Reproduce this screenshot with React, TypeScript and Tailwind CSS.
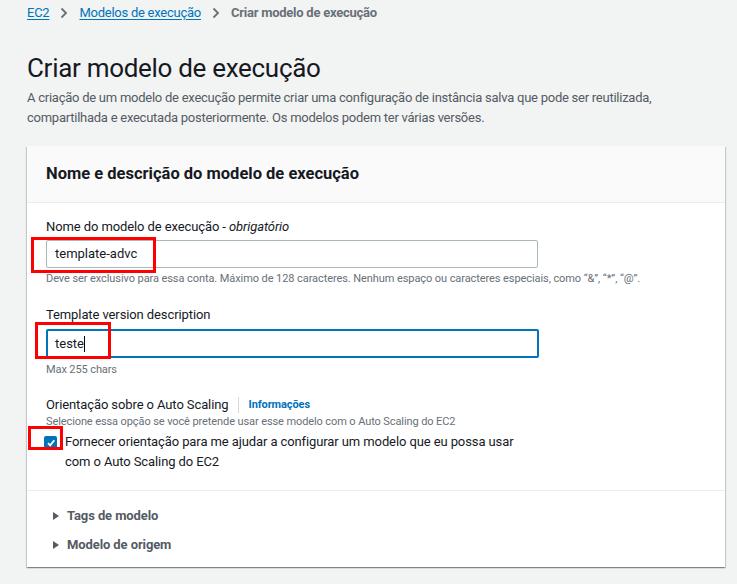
import React from "react";

const font = { fontFamily: "Roboto, 'Liberation Sans', sans-serif" };

const Chevron = () => (
  <svg width="10" height="12" viewBox="0 0 10 12" className="mx-[10px]">
    <path d="M2.5 1.5 7 6l-4.5 4.5" fill="none" stroke="#687078" strokeWidth="1.8" />
  </svg>
);

const Caret = () => (
  <svg width="8" height="10" viewBox="0 0 8 10" className="mr-[7px]">
    <path d="M1 1v8l6-4z" fill="#545b64" />
  </svg>
);

const RedBox = ({ className }: { className: string }) => (
  <div className={`absolute border-[3px] border-[#ff0000] pointer-events-none ${className}`} />
);

export default function App() {
  return (
    <div style={font} className="w-[737px] h-[584px] bg-[#f2f3f3] overflow-hidden text-[#16191f]">
      <div className="flex items-center pl-[27px] pt-[5px] h-[20px] text-[13px] tracking-[-0.25px]">
        <span className="text-[#0073bb] underline underline-offset-2">EC2</span>
        <Chevron />
        <span className="text-[#0073bb] underline underline-offset-2">Modelos de execução</span>
        <Chevron />
        <span className="text-[#687078] font-bold">Criar modelo de execução</span>
      </div>

      <div className="pl-[27px] pt-[33px]">
        <h1 className="text-[26px] leading-[30px] tracking-[-0.3px] font-normal">Criar modelo de execução</h1>
        <p className="mt-[5px] text-[13px] leading-[20px] tracking-[-0.25px] text-[#545b64] w-[670px]">
          A criação de um modelo de execução permite criar uma configuração de instância salva que pode ser reutilizada,
          compartilhada e executada posteriormente. Os modelos podem ter várias versões.
        </p>
      </div>

      <div className="ml-[27px] mt-[18px] w-[698px] bg-white shadow-[0_1px_1px_0_rgba(0,28,36,0.3),1px_1px_1px_0_rgba(0,28,36,0.15),-1px_1px_1px_0_rgba(0,28,36,0.15)]">
        <div className="h-[57px] bg-[#fafafa] border-b border-[#eaeded] flex items-center px-[19px]">
          <h2 className="text-[16.5px] font-bold tracking-[0px]">Nome e descrição do modelo de execução</h2>
        </div>

        <div className="relative px-[19px] pt-[14px] pb-[18px]">
          <div className="text-[13px] leading-[20px] tracking-[-0.1px]">
            Nome do modelo de execução - <i>obrigatório</i>
          </div>
          <div className="mt-[3px] w-[492px] h-[28px] border border-[#aab7b8] rounded-[2px] flex items-center px-[8px] text-[13px]">
            template-advc
          </div>
          <div className="mt-[3px] text-[11px] leading-[16px] tracking-[-0.08px] text-[#687078]">
            Deve ser exclusivo para essa conta. Máximo de 128 caracteres. Nenhum espaço ou caracteres especiais, como “&”, “*”, “@”.
          </div>

          <div className="mt-[18px] text-[13px] leading-[20px] tracking-[-0.1px]">Template version description</div>
          <div className="mt-[4px] w-[493px] h-[29px] border-2 border-[#0073bb] rounded-[2px] flex items-center px-[7px] text-[13px]">
            teste<span className="inline-block w-[1px] h-[16px] bg-black" />
          </div>
          <div className="mt-[4px] text-[11px] leading-[16px] tracking-[-0.1px] text-[#687078]">Max 255 chars</div>

          <div className="mt-[17px] flex items-center text-[13px] leading-[20px] tracking-[-0.1px]">
            <span>Orientação sobre o Auto Scaling</span>
            <span className="ml-[9px] mr-[10px] w-px h-[16px] bg-[#d5dbdb]" />
            <span className="text-[#0073bb] font-bold text-[11px]">Informações</span>
          </div>
          <div className="text-[11px] leading-[14px] tracking-[-0.1px] text-[#687078]">
            Selecione essa opção se você pretende usar esse modelo com o Auto Scaling do EC2
          </div>
          <div className="mt-[3px] flex items-start">
            <div className="mt-[4px] w-[13px] h-[13px] bg-[#0073bb] rounded-[2px] flex items-center justify-center shrink-0 -ml-[2px]">
              <svg width="10" height="10" viewBox="0 0 10 10">
                <path d="M2 5.2 4.2 7.4 8.3 2.3" fill="none" stroke="white" strokeWidth="1.8" />
              </svg>
            </div>
            <div className="ml-[8px] text-[13px] leading-[20px] tracking-[-0.1px] w-[455px]">
              Fornecer orientação para me ajudar a configurar um modelo que eu possa usar com o Auto Scaling do EC2
            </div>
          </div>

          <RedBox className="left-[4px] top-[34px] w-[125px] h-[36px]" />
          <RedBox className="left-[8px] top-[119px] w-[76px] h-[37px]" />
          <RedBox className="left-[1px] top-[223px] w-[35px] h-[24px]" />
        </div>

        <div className="border-t border-[#eaeded] px-[25px] pt-[14px] pb-[11px] text-[13px] font-bold text-[#545b64] tracking-[-0.1px]">
          <div className="flex items-center h-[22px]">
            <Caret />Tags de modelo
          </div>
          <div className="flex items-center h-[22px] mt-[7px]">
            <Caret />Modelo de origem
          </div>
        </div>
      </div>
    </div>
  );
}
